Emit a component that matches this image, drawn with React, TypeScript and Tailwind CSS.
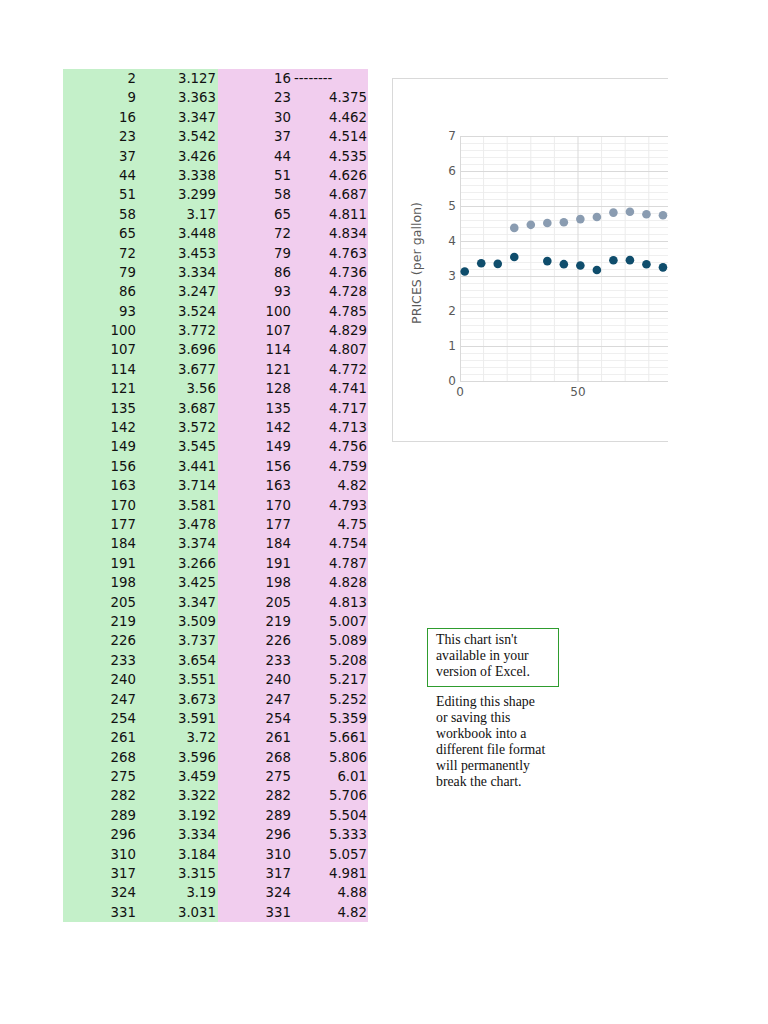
import React from 'react';

// rows of the sheet: [day, price] pairs for the two series
const leftRows: [number, string][] = [
  [2, '3.127'], [9, '3.363'], [16, '3.347'], [23, '3.542'], [37, '3.426'], [44, '3.338'],
  [51, '3.299'], [58, '3.17'], [65, '3.448'], [72, '3.453'], [79, '3.334'], [86, '3.247'],
  [93, '3.524'], [100, '3.772'], [107, '3.696'], [114, '3.677'], [121, '3.56'], [135, '3.687'],
  [142, '3.572'], [149, '3.545'], [156, '3.441'], [163, '3.714'], [170, '3.581'], [177, '3.478'],
  [184, '3.374'], [191, '3.266'], [198, '3.425'], [205, '3.347'], [219, '3.509'], [226, '3.737'],
  [233, '3.654'], [240, '3.551'], [247, '3.673'], [254, '3.591'], [261, '3.72'], [268, '3.596'],
  [275, '3.459'], [282, '3.322'], [289, '3.192'], [296, '3.334'], [310, '3.184'], [317, '3.315'],
  [324, '3.19'], [331, '3.031'],
];

const rightRows: [number, string][] = [
  [16, '--------'], [23, '4.375'], [30, '4.462'], [37, '4.514'], [44, '4.535'], [51, '4.626'],
  [58, '4.687'], [65, '4.811'], [72, '4.834'], [79, '4.763'], [86, '4.736'], [93, '4.728'],
  [100, '4.785'], [107, '4.829'], [114, '4.807'], [121, '4.772'], [128, '4.741'], [135, '4.717'],
  [142, '4.713'], [149, '4.756'], [156, '4.759'], [163, '4.82'], [170, '4.793'], [177, '4.75'],
  [184, '4.754'], [191, '4.787'], [198, '4.828'], [205, '4.813'], [219, '5.007'], [226, '5.089'],
  [233, '5.208'], [240, '5.217'], [247, '5.252'], [254, '5.359'], [261, '5.661'], [268, '5.806'],
  [275, '6.01'], [282, '5.706'], [289, '5.504'], [296, '5.333'], [310, '5.057'], [317, '4.981'],
  [324, '4.88'], [331, '4.82'],
];

// chart geometry (box-relative px)
const X0 = 67;
const Y0 = 302;
const SX = 2.36;
const SY = 35;

const PriceChart: React.FC = () => {
  const minor: number[] = [];
  for (let i = 1; i < 35; i++) if (i % 5 !== 0) minor.push(Y0 - i * 7);
  const vlines: number[] = [];
  for (let v = 10; v <= 90; v += 10) vlines.push(v);

  return (
    <div className="w-[276px] h-[364px] border-l border-t border-b border-[#d9d9d9] overflow-hidden bg-white">
      <svg width="290" height="362" style={{ fontFamily: '"DejaVu Sans", sans-serif' }}>
        {/* minor horizontal grid */}
        {minor.map((y) => (
          <line key={'m' + y} x1={X0} x2={290} y1={y + 0.5} y2={y + 0.5} stroke="#efefef" strokeWidth="1" />
        ))}
        {/* vertical grid */}
        {vlines.map((v) => (
          <line
            key={'v' + v}
            x1={X0 + v * SX}
            x2={X0 + v * SX}
            y1={Y0 - 7 * SY}
            y2={Y0}
            stroke={v === 50 ? '#d9d9d9' : '#ececec'}
            strokeWidth="1"
          />
        ))}
        {/* major horizontal grid + y labels */}
        {[0, 1, 2, 3, 4, 5, 6, 7].map((n) => (
          <g key={'h' + n}>
            <line x1={X0} x2={290} y1={Y0 - n * SY + 0.5} y2={Y0 - n * SY + 0.5} stroke="#d9d9d9" strokeWidth="1" />
            <text x={X0 - 4} y={Y0 - n * SY + 4} textAnchor="end" fontSize="12" fill="#595959">
              {n}
            </text>
          </g>
        ))}
        {/* axis */}
        <line x1={X0 + 0.5} x2={X0 + 0.5} y1={Y0 - 7 * SY} y2={Y0} stroke="#d9d9d9" strokeWidth="1" />
        <text x={X0} y={Y0 + 15} textAnchor="middle" fontSize="12" fill="#595959">0</text>
        <text x={X0 + 50 * SX} y={Y0 + 15} textAnchor="middle" fontSize="12" fill="#595959">50</text>
        <text
          x={28}
          y={184}
          transform="rotate(-90 28 184)"
          textAnchor="middle"
          fontSize="12.6"
          fill="#595959"
        >
          PRICES (per gallon)
        </text>
        {/* series */}
        {rightRows
          .filter(([, v]) => v !== '--------')
          .map(([d, v]) => (
            <circle key={'r' + d} cx={X0 + d * SX} cy={Y0 - parseFloat(v) * SY} r="4.3" fill="#8a9cb1" />
          ))}
        {leftRows.map(([d, v]) => (
          <circle key={'l' + d} cx={X0 + d * SX} cy={Y0 - parseFloat(v) * SY} r="4.3" fill="#0f4d6c" />
        ))}
      </svg>
    </div>
  );
};

const App: React.FC = () => {
  return (
    <div className="w-[768px] h-[1024px] bg-white pt-[69px] pl-[63px] flex items-start">
      {/* sheet columns */}
      <div
        className="grid grid-cols-[76px_79px_75px_75px] text-[13.3px] text-[#111]"
        style={{ fontFamily: '"DejaVu Sans", sans-serif' }}
      >
        {leftRows.map(([d, v], i) => {
          const [rd, rv] = rightRows[i];
          const dash = rv === '--------';
          return (
            <React.Fragment key={d + '-' + i}>
              <div className="h-[19.4px] leading-[19.4px] bg-[#c4f0c9] text-right pr-[3px]">{d}</div>
              <div className="h-[19.4px] leading-[19.4px] bg-[#c4f0c9] text-right pr-[2px]">{v}</div>
              <div className="h-[19.4px] leading-[19.4px] bg-[#f1cdee] text-right pr-[2px]">{rd}</div>
              <div
                className={
                  'h-[19.4px] leading-[19.4px] bg-[#f1cdee] ' + (dash ? 'text-left pl-[1px]' : 'text-right pr-[1px]')
                }
              >
                {rv}
              </div>
            </React.Fragment>
          );
        })}
      </div>

      {/* chart and fallback notice */}
      <div className="ml-[24px] pt-[9px] flex flex-col">
        <PriceChart />
        <div
          className="mt-[186px] ml-[35px] w-[132px] text-[13.8px] leading-[15.9px] text-[#111]"
          style={{ fontFamily: '"Liberation Serif", serif' }}
        >
          <div className="border border-[#2e9c2e] h-[59px] pl-[8px] pt-[3px] pr-[4px]">
            This chart isn't available in your version of Excel.
          </div>
          <p className="mt-[7px] pl-[9px] w-[122px]">
            Editing this shape or saving this workbook into a different file format will permanently break the chart.
          </p>
        </div>
      </div>
    </div>
  );
};

export default App;
